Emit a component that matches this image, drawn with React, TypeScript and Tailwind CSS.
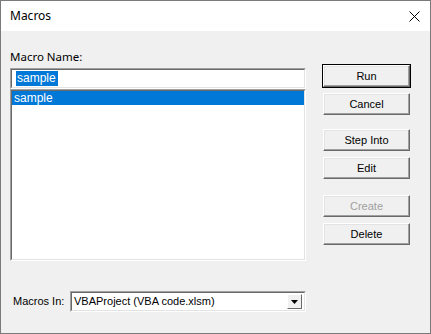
import React from 'react';

const sunken =
  'border-t border-l border-t-[#a0a0a0] border-l-[#a0a0a0] border-r border-b border-r-white border-b-white';
const sunkenInner =
  'border-t border-l border-t-[#696969] border-l-[#696969] border-r border-b border-r-[#e3e3e3] border-b-[#e3e3e3]';
const classic = { fontFamily: '"Liberation Sans", Arial, sans-serif' };

interface BtnProps {
  label: string;
  disabled?: boolean;
  isDefault?: boolean;
  className?: string;
}

const DialogButton: React.FC<BtnProps> = ({ label, disabled, isDefault, className = '' }) => {
  const inner = (
    <div
      style={classic}
      className={`flex h-[22px] w-[87px] items-center justify-center border-t border-l border-t-white border-l-white border-r border-b border-r-[#696969] border-b-[#696969] bg-[#f0f0f0] shadow-[inset_-1px_-1px_0_#a0a0a0,inset_1px_1px_0_#e3e3e3] text-[11px] ${
        disabled ? 'text-[#a0a0a0]' : 'text-black'
      }`}
    >
      {label}
    </div>
  );
  if (isDefault) {
    return <div className={`border-[1px] border-black ${className}`}>{inner}</div>;
  }
  return <div className={`ml-[1px] ${className}`}>{inner}</div>;
};

export default function App() {
  return (
    <div
      className="flex h-[334px] w-[431px] flex-col border border-[#7a7a7a] bg-[#f0f0f0] text-black"
      style={{ fontFamily: '"Noto Sans", "DejaVu Sans", sans-serif' }}
    >
      <div className="flex h-[30px] shrink-0 items-center justify-between bg-white pl-[9px] pr-[10px]">
        <span className="text-[12px]">Macros</span>
        <svg width="11" height="11" viewBox="0 0 11 11">
          <path d="M0.5 0.5L10.5 10.5M10.5 0.5L0.5 10.5" stroke="#000" strokeWidth="1" />
        </svg>
      </div>

      <div className="flex flex-1">
        <div className="ml-[9px] flex w-[296px] flex-col">
          <div className="mt-[18px] h-[16px] text-[11.5px] leading-[16px]">Macro Name:</div>
          <div className={`mt-[3px] h-[21px] ${sunken}`}>
            <div className={`flex h-full items-center bg-white pl-[4px] ${sunkenInner}`} style={classic}>
              <span className="bg-[#0078d7] px-[1px] text-[12px] leading-[15px] text-white">sample</span>
              <span className="h-[15px] w-[1px] bg-[#0078d7]" />
            </div>
          </div>
          <div className={`h-[172px] ${sunken}`}>
            <div className={`h-full bg-white ${sunkenInner}`} style={classic}>
              <div className="flex h-[14px] items-center bg-[#0078d7] pl-[2px] text-[12px] text-white">
                sample
              </div>
            </div>
          </div>
          <div className="mt-[30px] flex items-center" style={classic}>
            <span className="ml-[3px] w-[57px] text-[11px]">Macros In:</span>
            <div className={`h-[21px] flex-1 ${sunken}`}>
              <div className={`flex h-full items-center justify-between bg-white pl-[2px] pr-[2px] ${sunkenInner}`}>
                <span className="text-[11px]">VBAProject (VBA code.xlsm)</span>
                <div className="flex h-[15px] w-[15px] items-center justify-center border-t border-l border-t-white border-l-white border-r border-b border-r-[#696969] border-b-[#696969] bg-[#f0f0f0]">
                  <svg width="7" height="4" viewBox="0 0 7 4">
                    <path d="M0 0H7L3.5 4Z" fill="#000" />
                  </svg>
                </div>
              </div>
            </div>
          </div>
        </div>

        <div className="ml-[16px] mt-[33px] flex flex-col">
          <DialogButton label="Run" isDefault />
          <DialogButton label="Cancel" className="mt-[5px]" />
          <DialogButton label="Step Into" className="mt-[14px]" />
          <DialogButton label="Edit" className="mt-[6px]" />
          <DialogButton label="Create" disabled className="mt-[16px]" />
          <DialogButton label="Delete" className="mt-[6px]" />
        </div>
      </div>
    </div>
  );
}
